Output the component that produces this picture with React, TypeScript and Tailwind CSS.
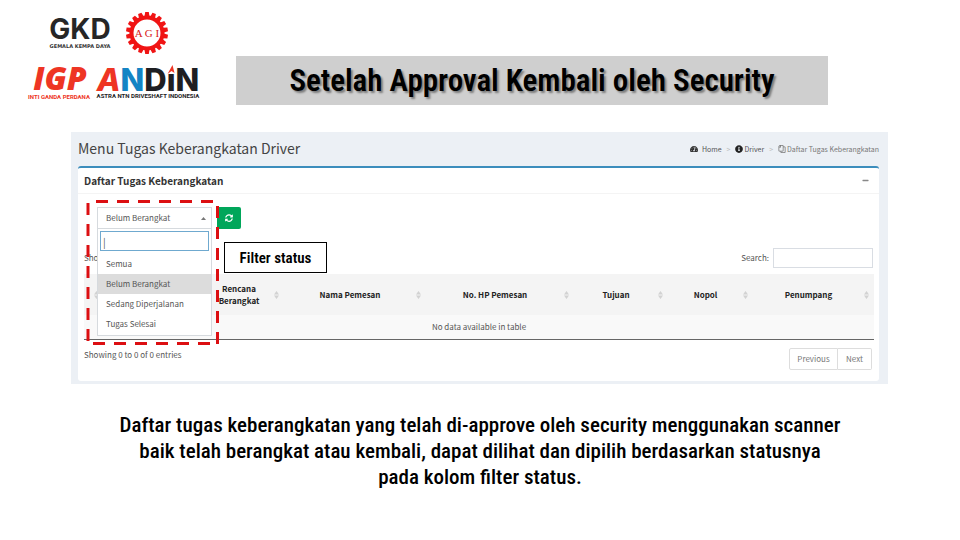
import { useState } from "react";
import { FaInfoCircle, FaTachometerAlt, FaRegCopy, FaSyncAlt, FaMinus } from "react-icons/fa";

const statuses = ["Semua", "Belum Berangkat", "Sedang Diperjalanan", "Tugas Selesai"];

const columns = [
  { label: "", width: "w-[20px]" },
  { label: "", width: "w-[100px]" },
  { label: "Rencana Berangkat", width: "w-[80px]" },
  { label: "Nama Pemesan", width: "w-[142px]" },
  { label: "No. HP Pemesan", width: "w-[148px]" },
  { label: "Tujuan", width: "w-[94px]" },
  { label: "Nopol", width: "w-[85px]" },
  { label: "Penumpang", width: "w-[121px]" },
];

function GkdLogo() {
  return (
    <svg className="h-[34px] w-[60px] overflow-visible" viewBox="0 0 60 34" role="img" aria-label="GKD">
      <text x="30" y="23" textAnchor="middle" fontFamily="Inter, sans-serif" fontWeight="700" fontSize="28" fill="#262626">GKD</text>
      <text x="30" y="32" textAnchor="middle" fontFamily="DejaVu Sans, sans-serif" fontWeight="700" fontSize="5" fill="#333">GEMALA KEMPA DAYA</text>
    </svg>
  );
}

function AgiLogo() {
  const teeth = Array.from({ length: 18 }, (_, i) => i * 20);
  return (
    <svg className="size-[42px] overflow-visible" viewBox="0 0 42 42" role="img" aria-label="AGI">
      <g fill="#f01414">
        {teeth.map((a) => (
          <polygon key={a} points="18.4,5 19.2,0 22.8,0 23.6,5" transform={`rotate(${a} 21 21)`} />
        ))}
      </g>
      <circle cx="21" cy="21" r="15.5" fill="#fff" stroke="#f01414" strokeWidth="4" />
      <text x="21" y="25" textAnchor="middle" fontFamily="Liberation Serif, serif" fontSize="11" fill="#d81818">A G I</text>
    </svg>
  );
}

function IgpLogo() {
  return (
    <svg className="h-[36px] w-[62px] overflow-visible" viewBox="0 0 62 36" role="img" aria-label="IGP">
      <text x="32" y="25" textAnchor="middle" fontFamily="Open Sans, sans-serif" fontStyle="italic" fontWeight="800" fontSize="32" fill="#ee3524">IGP</text>
      <text x="31" y="34" textAnchor="middle" fontFamily="Roboto, sans-serif" fontWeight="700" fontSize="6" fill="#ee3524">INTI GANDA PERDANA</text>
    </svg>
  );
}

function AndinLogo() {
  return (
    <svg className="h-[36px] w-[104px] overflow-visible" viewBox="0 0 104 36" role="img" aria-label="ANDIN">
      <text x="52" y="26" textAnchor="middle" fontFamily="Inter, sans-serif" fontWeight="800" fontSize="31" fill="#1e1e22">
        <tspan fill="#ee3524" fontStyle="italic">A</tspan>
        <tspan fill="#1484c4">N</tspan>
        <tspan>DıN</tspan>
      </text>
      <path d="M71.5 9 76.5 0 78.5 8 75.5 6Z" fill="#ee3524" />
      <text x="52" y="33" textAnchor="middle" fontFamily="Roboto, sans-serif" fontWeight="700" fontSize="6" fill="#222">ASTRA NTN DRIVESHAFT INDONESIA</text>
    </svg>
  );
}

function SortIcon() {
  return (
    <svg className="h-2 w-[5px] shrink-0" viewBox="0 0 5 8" fill="#d2d2d2" aria-hidden="true">
      <path d="M0 3.5 2.5 0 5 3.5ZM0 4.5 2.5 8 5 4.5Z" />
    </svg>
  );
}

function Highlight() {
  return (
    <svg className="pointer-events-none absolute -left-3 -top-2 h-[146px] w-[136px]" viewBox="0 0 136 146" stroke="#dc0f12" strokeWidth="3" strokeDasharray="12 9" fill="none" aria-hidden="true">
      <path d="M11 2.5H128" />
      <path d="M132.5 7V145" />
      <path d="M3 4V142" />
      <path d="M8 144.5H126" />
    </svg>
  );
}

function StatusFilter() {
  const [status, setStatus] = useState("Belum Berangkat");
  return (
    <div className="relative ml-[13px] flex h-[22px] w-max gap-[5px]">
      <div className="relative w-[115px]">
        <select
          aria-label="Status"
          value={status}
          onChange={(e) => setStatus(e.target.value)}
          className="block h-[22px] w-full appearance-none border border-[#d6dade] bg-white px-2 text-[8px] text-[#555]"
        >
          {statuses.map((s) => (
            <option key={s}>{s}</option>
          ))}
        </select>
        <svg className="pointer-events-none absolute right-[6px] top-[10px] h-[3px] w-[5px]" viewBox="0 0 5 3" fill="#777" aria-hidden="true">
          <path d="M0 3 2.5 0 5 3Z" />
        </svg>
        <div className="absolute inset-x-0 top-[22px] z-10 border border-t-0 border-[#d6dade] bg-white">
          <div className="p-[2px] pb-[3px]">
            <input aria-label="Cari status" defaultValue="|" className="block h-5 w-full border border-[#6fa9cf] bg-white px-[2px] text-[10px] text-[#555] outline-none" />
          </div>
          <div role="listbox" aria-label="Pilihan status" className="pb-px">
            {statuses.map((s) => (
              <button
                key={s}
                role="option"
                aria-selected={s === status}
                onClick={() => setStatus(s)}
                className={`block h-5 w-full px-2 text-left ${s === status ? "bg-[#dcdcdc]" : "bg-white"}`}
              >
                {s}
              </button>
            ))}
          </div>
        </div>
      </div>
      <button aria-label="Muat ulang" className="flex w-6 items-center justify-center rounded-[2px] bg-[#00a65a] text-white">
        <FaSyncAlt className="size-2" />
      </button>
      <div className="pointer-events-none absolute inset-0 z-20">
        <Highlight />
        <div className="absolute left-[127px] top-[35px] flex h-[31px] w-[103px] items-center justify-center border border-black bg-white font-['Roboto_Condensed','Liberation_Sans_Narrow',sans-serif] text-[15px] font-semibold text-black">
          Filter status
        </div>
      </div>
    </div>
  );
}

function TaskPanel() {
  return (
    <section className="ml-[71px] mr-[72px] mt-[27px] bg-[#ecf0f5] px-[7px] pb-[3px] font-['Noto_Sans_CJK_SC',sans-serif] text-[8px] leading-3 text-[#555]">
      <header className="flex h-[34px] items-center justify-between pr-[2px]">
        <h2 className="pb-[2px] text-[14px] leading-5 text-[#444]">Menu Tugas Keberangkatan Driver</h2>
        <nav className="flex items-center gap-1 text-[7px] text-[#555]">
          <FaTachometerAlt className="size-2 text-[#333]" />
          <a href="#home">Home</a>
          <span className="px-px text-[#bbb]">&gt;</span>
          <a href="#driver" className="flex items-center gap-px"><FaInfoCircle className="size-2 text-[#222]" />Driver</a>
          <span className="px-px text-[#bbb]">&gt;</span>
          <span className="flex items-center gap-px text-[#777]"><FaRegCopy className="size-2 -scale-x-100" />Daftar Tugas Keberangkatan</span>
        </nav>
      </header>
      <div className="mr-[2px] rounded-[3px] border-t-2 border-[#3c8dbc] bg-white pb-[11px]">
        <div className="flex h-[26px] items-center justify-between border-b border-[#f4f4f4] pl-[6px] pr-[10px]">
          <h3 className="text-[10px] font-bold text-[#333]">Daftar Tugas Keberangkatan</h3>
          <button aria-label="Ciutkan" className="text-[#888]"><FaMinus className="size-[7px]" /></button>
        </div>
        <div className="pl-[6px] pr-[5px] pt-[13px]">
          <StatusFilter />
          <div className="mt-[19px] flex h-5 items-center justify-between pr-px">
            <span>Show</span>
            <label className="flex items-center gap-1">
              Search:
              <input type="search" className="h-5 w-[100px] border border-[#d9dde3] bg-white px-1 outline-none" />
            </label>
          </div>
          <table className="mt-[6px] w-full table-fixed border-b border-[#666]">
            <thead>
              <tr className="h-[41px] bg-[#f4f4f4] text-[#222]">
                {columns.map((c, i) => (
                  <th key={i} className={`p-0 pr-[5px] font-bold ${c.width}`}>
                    <div className="flex items-center">
                      <span className="flex-1">{c.label}</span>
                      <SortIcon />
                    </div>
                  </th>
                ))}
              </tr>
            </thead>
            <tbody>
              <tr className="h-6 bg-[#f9f9f9]">
                <td colSpan={8} className="text-center">No data available in table</td>
              </tr>
            </tbody>
          </table>
          <div className="mt-2 flex items-start justify-between pr-[2px]">
            <span className="mt-px">Showing 0 to 0 of 0 entries</span>
            <div className="flex h-[22px] text-[#777]">
              <button className="w-[49px] rounded-l-[2px] border border-[#ddd]">Previous</button>
              <button className="w-[34px] rounded-r-[2px] border border-l-0 border-[#ddd]">Next</button>
            </div>
          </div>
        </div>
      </div>
    </section>
  );
}

export default function App() {
  return (
    <main className="min-h-screen bg-white font-['Roboto_Condensed','Liberation_Sans_Narrow',sans-serif] text-black">
      <div className="flex items-end">
        <div className="w-[236px] shrink-0 pb-1 pl-7 pt-3">
          <div className="flex items-center gap-4 pl-[22px]">
            <GkdLogo />
            <AgiLogo />
          </div>
          <div className="mt-[11px] flex items-center gap-[6px]">
            <IgpLogo />
            <AndinLogo />
          </div>
        </div>
        <h1 className="mr-[132px] flex h-[49px] flex-1 items-center justify-center bg-[#cfcfcf] text-[31px] font-semibold leading-10 [text-shadow:2px_2px_2px_rgba(0,0,0,0.4)]">
          Setelah Approval Kembali oleh Security
        </h1>
      </div>
      <TaskPanel />
      <p className="mx-auto mt-7 max-w-[740px] pb-10 text-center text-[21px] font-medium leading-[26px]">
        Daftar tugas keberangkatan yang telah di-approve oleh security menggunakan scanner
        <br />
        baik telah berangkat atau kembali, dapat dilihat dan dipilih berdasarkan statusnya
        <br />
        pada kolom filter status.
      </p>
    </main>
  );
}
